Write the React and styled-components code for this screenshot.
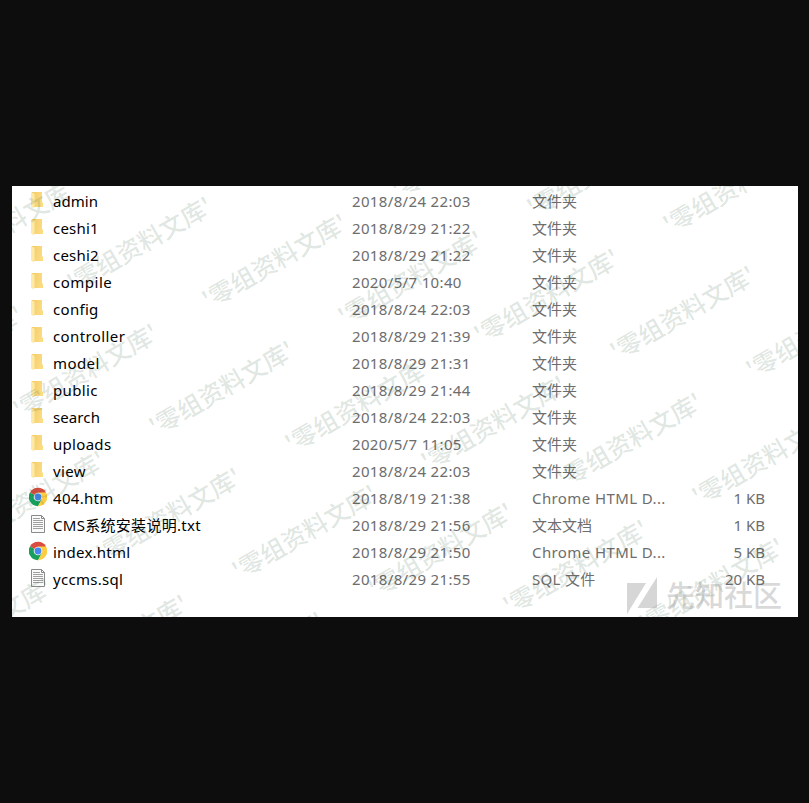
import React from "react";
import styled, { createGlobalStyle, css } from "styled-components";

const Global = createGlobalStyle`
  * { box-sizing: border-box; }
  html, body { margin: 0; background: #0d0d0d; }
`;

const Stage = styled.main`
  display: flex;
  height: 803px;
  padding: 186px 11px 186px 12px;
  background: #0d0d0d;
  overflow: hidden;
`;

const Panel = styled.section`
  position: relative;
  flex: 1;
  padding-top: 1px;
  background: #fff;
  overflow: hidden;
  font-family: "Noto Sans", "Noto Sans CJK SC", sans-serif;
  font-size: 15px;
`;

const Row = styled.div`
  display: grid;
  grid-template-columns: 24px 299px 180px 150px 83px;
  align-items: center;
  height: 27px;
  padding-left: 17px;
  white-space: nowrap;
`;

const IconCell = styled.span`
  display: flex;
  width: 18px;
  height: 20px;
  margin-bottom: 1px;
`;

const Name = styled.span`
  color: #000;
  letter-spacing: ${(p) => p.$track || 0}px;
`;

const Meta = styled.span`
  color: #6d6d6d;
  letter-spacing: ${(p) => p.$track || 0}px;
  ${(p) => p.$right && css`text-align: right;`}
`;

const WatermarkLayer = styled.div`
  position: absolute;
  inset: 0;
  overflow: hidden;
  pointer-events: none;
`;

const Watermark = styled.span`
  position: absolute;
  left: ${(p) => p.$x}px;
  top: ${(p) => p.$y}px;
  transform: translate(-50%, -50%) rotate(-30deg);
  font: 500 24.6px/1 "Noto Sans CJK SC", sans-serif;
  color: rgba(20, 75, 35, 0.14);
  white-space: nowrap;
`;

const Brand = styled.div`
  position: absolute;
  left: 615px;
  top: 391px;
  display: flex;
  align-items: flex-start;
  gap: 9px;
  color: rgba(120, 120, 120, 0.3);
  font: 500 29px/34px "Noto Sans CJK SC", sans-serif;
`;

const FolderIcon = () => (
  <svg width="18" height="20" viewBox="0 0 18 20">
    <defs>
      <linearGradient id="folderBody" x1="0" x2="1" y1="0" y2="0.3">
        <stop offset="0" stopColor="#f3cb68" />
        <stop offset="1" stopColor="#fbdc83" />
      </linearGradient>
    </defs>
    <path d="M3 2h10v10.5h1V17H4z" fill="url(#folderBody)" />
    <path d="M2 2.2l3.6 1.6v10.4L5 18.6l-3-2z" fill="#ffe9a6" />
  </svg>
);

const ChromeIcon = () => (
  <svg width="19" height="20" viewBox="0 0 18 20" preserveAspectRatio="none">
    <path d="M9 10L1 5.4A9.2 9.2 0 0 1 17 5.4z" fill="#db4d40" />
    <path d="M9 10L1 5.4A9.2 9.2 0 0 0 9 19.2L13 12z" fill="#17a05d" />
    <path d="M9 10L9 5.4H17A9.2 9.2 0 0 1 9 19.2L13 12z" fill="#ffcd42" />
    <circle cx="9" cy="10" r="4.3" fill="#f1f1f1" />
    <circle cx="9" cy="10" r="3.4" fill="#4688f1" />
  </svg>
);

const DocIcon = () => (
  <svg width="18" height="20" viewBox="0 0 18 20" fill="none">
    <path d="M2.5 1.5h10l3 3v14h-13z" fill="#fafafa" stroke="#8a8a8a" />
    <path d="M12.5 1.5v3h3" stroke="#8a8a8a" />
    <path d="M4 4.5h7M4 6.5h10M4 8.5h10M4 10.5h10M4 12.5h10M4 14.5h10" stroke="#a0a0a0" />
  </svg>
);

const BrandMark = () => (
  <svg width="30" height="38" viewBox="0 0 30 38">
    <path d="M0 6h19L0 37z" fill="currentColor" />
    <path d="M30 0v31H10.500z" fill="currentColor" />
  </svg>
);

const icons = { folder: FolderIcon, chrome: ChromeIcon, doc: DocIcon };

const files = [
  { kind: "folder", name: "admin", track: 0.05, date: "2018/8/24 22:03", type: "文件夹" },
  { kind: "folder", name: "ceshi1", track: 0.2, date: "2018/8/29 21:22", type: "文件夹" },
  { kind: "folder", name: "ceshi2", track: 0.2, date: "2018/8/29 21:22", type: "文件夹" },
  { kind: "folder", name: "compile", track: 0.5, date: "2020/5/7 10:40", type: "文件夹" },
  { kind: "folder", name: "config", track: 0.3, date: "2018/8/24 22:03", type: "文件夹" },
  { kind: "folder", name: "controller", track: 0.4, date: "2018/8/29 21:39", type: "文件夹" },
  { kind: "folder", name: "model", track: 0.4, date: "2018/8/29 21:31", type: "文件夹" },
  { kind: "folder", name: "public", track: 0.35, date: "2018/8/29 21:44", type: "文件夹" },
  { kind: "folder", name: "search", track: 0.1, date: "2018/8/24 22:03", type: "文件夹" },
  { kind: "folder", name: "uploads", track: 0.3, date: "2020/5/7 11:05", type: "文件夹" },
  { kind: "folder", name: "view", track: 0.4, date: "2018/8/24 22:03", type: "文件夹" },
  { kind: "chrome", name: "404.htm", track: 0.3, date: "2018/8/19 21:38", type: "Chrome HTML D...", typeTrack: 0.4, size: "1 KB" },
  { kind: "doc", name: "CMS系统安装说明.txt", track: 0.3, date: "2018/8/29 21:56", type: "文本文档", size: "1 KB" },
  { kind: "chrome", name: "index.html", track: 0.22, date: "2018/8/29 21:50", type: "Chrome HTML D...", typeTrack: 0.4, size: "5 KB" },
  { kind: "doc", name: "yccms.sql", track: 0.3, date: "2018/8/29 21:55", type: "SQL 文件", typeTrack: 0.3, size: "20 KB" },
];

const marks = [];
for (let j = -2; j <= 4; j++) {
  for (let i = -3; i <= 7; i++) {
    const x = 126.5 + i * 135.8 - j * 53.2;
    const y = 56.5 + i * 17.4 + j * 127;
    if (x > -75 && x < 860 && y > -45 && y < 475) marks.push({ x, y });
  }
}

export default function App() {
  return (
    <Stage>
      <Global />
      <Panel>
        {files.map(({ kind, name, track, date, type, typeTrack, size }) => {
          const Icon = icons[kind];
          return (
            <Row key={name}>
              <IconCell><Icon /></IconCell>
              <Name $track={track}>{name}</Name>
              <Meta $track={0.35}>{date}</Meta>
              <Meta $track={typeTrack}>{type}</Meta>
              <Meta $right>{size}</Meta>
            </Row>
          );
        })}
        <WatermarkLayer>
          {marks.map(({ x, y }) => (
            <Watermark key={`${x},${y}`} $x={x} $y={y}>'零组资料文库'</Watermark>
          ))}
        </WatermarkLayer>
        <Brand><BrandMark />先知社区</Brand>
      </Panel>
    </Stage>
  );
}
